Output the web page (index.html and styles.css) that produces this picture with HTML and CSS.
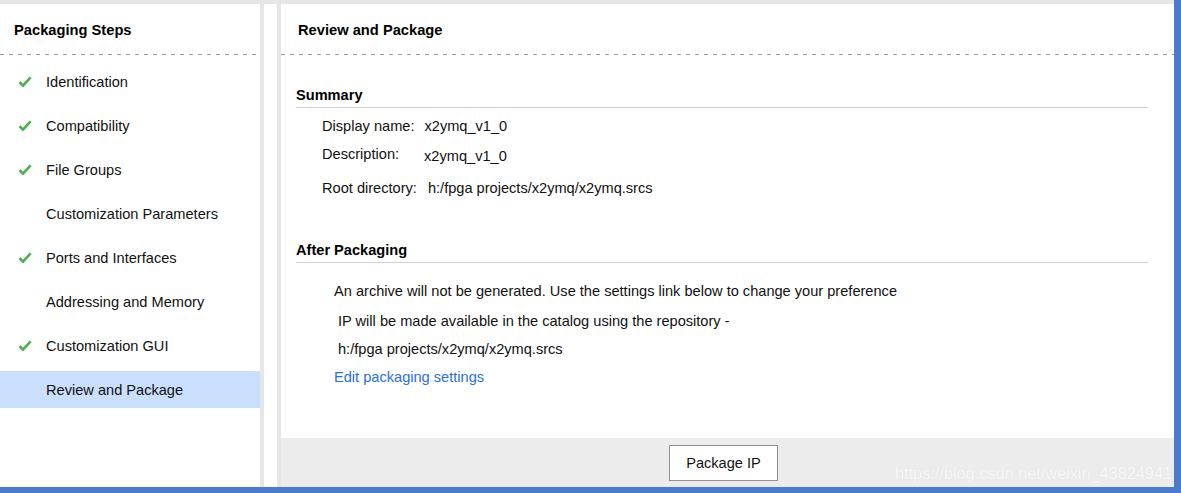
FILE: index.html
```html
<!DOCTYPE html>
<html lang="en">
<head>
    <meta charset="UTF-8">
    <title>Package IP - Review and Package</title>
    <link rel="stylesheet" href="styles.css">
</head>
<body>
    <div class="window">
        <!-- Lista de pasos -->
        <div class="steps-panel">
            <div class="panel-title">Packaging Steps</div>
            <ul class="steps">
                <li class="step done"><span class="check"><svg width="14" height="12" viewBox="0 0 14 12"><path d="M1.5 6.2 L5 9.6 L12.6 1.4" fill="none" stroke="#4caf50" stroke-width="2.6"/></svg></span>Identification</li>
                <li class="step done"><span class="check"><svg width="14" height="12" viewBox="0 0 14 12"><path d="M1.5 6.2 L5 9.6 L12.6 1.4" fill="none" stroke="#4caf50" stroke-width="2.6"/></svg></span>Compatibility</li>
                <li class="step done"><span class="check"><svg width="14" height="12" viewBox="0 0 14 12"><path d="M1.5 6.2 L5 9.6 L12.6 1.4" fill="none" stroke="#4caf50" stroke-width="2.6"/></svg></span>File Groups</li>
                <li class="step"><span class="check"></span>Customization Parameters</li>
                <li class="step done"><span class="check"><svg width="14" height="12" viewBox="0 0 14 12"><path d="M1.5 6.2 L5 9.6 L12.6 1.4" fill="none" stroke="#4caf50" stroke-width="2.6"/></svg></span>Ports and Interfaces</li>
                <li class="step"><span class="check"></span>Addressing and Memory</li>
                <li class="step done"><span class="check"><svg width="14" height="12" viewBox="0 0 14 12"><path d="M1.5 6.2 L5 9.6 L12.6 1.4" fill="none" stroke="#4caf50" stroke-width="2.6"/></svg></span>Customization GUI</li>
                <li class="step selected"><span class="check"></span>Review and Package</li>
            </ul>
        </div>

        <div class="splitter"></div>

        <!-- Contenido principal -->
        <div class="main-panel">
            <div class="main-content">
                <div class="panel-title main-title">Review and Package</div>

                <div class="section">
                    <div class="section-title">Summary</div>
                    <div class="info-row row-name">
                        <span class="label">Display name:</span>
                        <span class="value">x2ymq_v1_0</span>
                    </div>
                    <div class="info-row row-desc">
                        <span class="label">Description:</span>
                        <span class="value">x2ymq_v1_0</span>
                    </div>
                    <div class="info-row row-root">
                        <span class="label">Root directory:</span>
                        <span class="value">h:/fpga projects/x2ymq/x2ymq.srcs</span>
                    </div>
                </div>

                <div class="section after">
                    <div class="section-title">After Packaging</div>
                    <div class="note first">An archive will not be generated. Use the settings link below to change your preference</div>
                    <div class="note second">IP will be made available in the catalog using the repository -</div>
                    <div class="note second">h:/fpga projects/x2ymq/x2ymq.srcs</div>
                    <a class="note link" href="#">Edit packaging settings</a>
                </div>
            </div>

            <div class="footer">
                <button class="btn">Package IP</button>
                <span class="watermark">https://blog.csdn.net/weixin_43824941</span>
            </div>
        </div>
    </div>
</body>
</html>
```

FILE: styles.css
```css
html, body {
    margin: 0;
    height: 100%;
}

body {
    font-family: "Liberation Sans", Arial, sans-serif;
    font-size: 14.6px;
    color: #111;
    background: #e6e6e6;
}

.window {
    box-sizing: border-box;
    height: 493px;
    display: flex;
    padding-top: 4px;
    background: #e6e6e6;
    border-right: 7px solid #4a7bcc;
    border-bottom: 6px solid #4a7bcc;
}

.steps-panel {
    width: 260px;
    background: #fff;
}

.splitter {
    width: 13px;
    background: #fff;
    border-left: 4px solid #e6e6e6;
    border-right: 4px solid #e6e6e6;
}

.panel-title {
    height: 51px;
    box-sizing: border-box;
    padding: 18px 0 0 14px;
    line-height: 17px;
    font-size: 14.7px;
    font-weight: bold;
    color: #000;
    background: repeating-linear-gradient(to right, #9a9a9a 0 4px, transparent 4px 9px) left bottom / 100% 1px no-repeat;
}

.steps {
    list-style: none;
    margin: 0;
    padding: 8px 0 0 0;
}

.step {
    height: 37px;
    margin-bottom: 7px;
    display: flex;
    align-items: center;
    padding-left: 18px;
}

.check {
    width: 14px;
    height: 12px;
    margin-right: 14px;
    display: flex;
}

.step.selected {
    background: #cadffc;
}

.main-panel {
    flex: 1;
    display: flex;
    flex-direction: column;
    background: #fff;
}

.main-content {
    flex: 1;
}

.main-title {
    padding-left: 17px;
}

.section {
    margin: 32px 26px 0 15px;
}

.section-title {
    font-weight: bold;
    color: #000;
    line-height: 17px;
    padding-bottom: 3px;
    border-bottom: 1px solid #d0d0d0;
}

.info-row {
    display: flex;
    padding-left: 26px;
    line-height: 17px;
}

.row-name {
    padding-top: 10px;
}

.row-name .value {
    margin-left: 10px;
}

.row-desc {
    padding-top: 11px;
}

.row-desc .value {
    margin-left: 25px;
    padding-top: 2px;
}

.row-root {
    padding-top: 15px;
}

.row-root .value {
    margin-left: 11px;
}

.after {
    margin-top: 45px;
}

.note {
    display: block;
    line-height: 17px;
    padding-left: 38px;
}

.note.first {
    margin-top: 20px;
}

.note.second {
    padding-left: 42px;
    margin-top: 13px;
}

.note.second + .note.second {
    margin-top: 11px;
}

.note.link {
    margin-top: 11px;
    color: #2a6fe0;
    text-decoration: none;
    width: max-content;
}

.footer {
    position: relative;
    height: 49px;
    box-sizing: border-box;
    padding: 7px 8px 0 0;
    display: flex;
    justify-content: center;
    align-items: flex-start;
    background: #ececec;
}

.btn {
    width: 109px;
    height: 36px;
    background: #fff;
    border: 1px solid #8f8f8f;
    font-family: "Liberation Sans", Arial, sans-serif;
    font-size: 14.6px;
    color: #111;
    cursor: pointer;
}

.watermark {
    position: absolute;
    right: 2px;
    bottom: 4px;
    font-size: 16.3px;
    color: #f8f8f8;
    text-shadow: 0 0 1px #dcdcdc;
}
```
